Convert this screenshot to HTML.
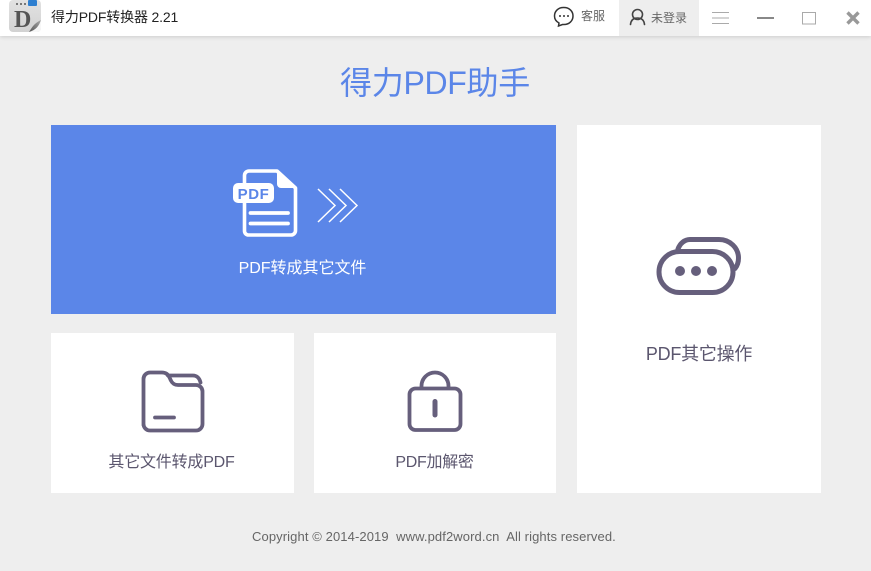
<!DOCTYPE html>
<html><head><meta charset="utf-8"><style>
html,body{margin:0;padding:0}
body{width:871px;height:571px;overflow:hidden;background:#eeeeee;position:relative;font-family:"Liberation Sans","Noto Sans CJK SC",sans-serif}
div{position:absolute;white-space:nowrap}
.t{line-height:20px}
</style></head><body>
<div style="left:0;top:0;width:871px;height:36px;background:#fff;box-shadow:0 1px 4px rgba(0,0,0,.14)"></div>
<div style="left:619px;top:0;width:80px;height:36px;background:#eeeeee"></div>
<div style="left:51px;top:125px;width:505px;height:189px;background:#5b86e8"></div>
<div style="left:577px;top:125px;width:244px;height:368px;background:#fff"></div>
<div style="left:51px;top:333px;width:243px;height:160px;background:#fff"></div>
<div style="left:314px;top:333px;width:242px;height:160px;background:#fff"></div>
<svg width="871" height="571" viewBox="0 0 871 571" style="position:absolute;left:0;top:0">
<defs><linearGradient id="g" x1="0" y1="0" x2="0" y2="1"><stop offset="0" stop-color="#e2e2e2"/><stop offset="1" stop-color="#d2d2d2"/></linearGradient>
<linearGradient id="f" x1="0" y1="1" x2="1" y2="0"><stop offset="0" stop-color="#555"/><stop offset="1" stop-color="#aaa"/></linearGradient></defs>
<rect x="9" y="0" width="32" height="32" rx="4" fill="url(#g)"/>
<path d="M41 20V28a4 4 0 0 1-4 4H29Z" fill="#f7f7f7"/>
<path d="M29 32C32 28 33 24 41 20C39 26 36 30 29 32Z" fill="url(#f)"/>
<rect x="28" y="0" width="9" height="6" rx="1" fill="#2e7fd0"/>
<g fill="#777"><rect x="16" y="3" width="2" height="2"/><rect x="20" y="3" width="2" height="2"/><rect x="24" y="3" width="2" height="2"/></g>
<text x="14" y="27" font-family="Liberation Serif" font-weight="bold" font-size="24" fill="#555">D</text>
<path d="M564 7.500c5.200 0 9 3.700 9 8.500s-3.800 8.500-9 8.500h-1.500l-4 1.500.5-3c-2.900-1.500-4.500-4-4.500-7 0-4.800 3.800-8.500 9-8.500Z" fill="none" stroke="#333" stroke-width="1.500"/>
<g fill="#333"><circle cx="560" cy="16" r="1"/><circle cx="564" cy="16" r="1"/><circle cx="568" cy="16" r="1"/></g>
<g fill="none" stroke="#444" stroke-width="1.600" stroke-linecap="round">
<circle cx="637.500" cy="14.500" r="5"/>
<path d="M630.500 24.500c.5-4.500 3.300-6.500 7-6.500s6.500 2 7 6.500"/>
</g>
<g stroke="#aaa" stroke-width="1"><path d="M712 12.500H729M712 18H729M712 23.500H729"/></g>
<rect x="757" y="17" width="17" height="2" fill="#888"/>
<rect x="802.500" y="12.500" width="13" height="11.500" fill="none" stroke="#aaa" stroke-width="1"/>
<path d="M847.500 12.500L858.500 23.500M858.500 12.500L847.500 23.500" stroke="#999" stroke-width="3.400"/>

<g fill="none" stroke="#fff">
<path d="M277 171H249a4.500 4.500 0 0 0-4.500 4.500V231a4 4 0 0 0 4 4H291a4.500 4.500 0 0 0 4.500-4.500V188Z" stroke-width="3.600" stroke-linejoin="round"/>
<path d="M277 172L296 188H281a4 4 0 0 1-4-4Z" fill="#fff" stroke="none"/>
<path d="M250.500 213H288M250.500 223.500H288" stroke-width="3.800" stroke-linecap="round"/>
<path d="M318 189L335 205.500L318 222M329 189L346 205.500L329 222M340 189L357 205.500L340 222" stroke-width="1.500"/>
</g>
<rect x="233" y="183" width="41" height="20" rx="5" fill="#fff"/>
<text x="253.500" y="199" text-anchor="middle" font-family="Liberation Sans" font-weight="bold" font-size="15" fill="#5b86e8" letter-spacing=".6">PDF</text>

<g fill="none" stroke="#665f7c" stroke-width="3.800" stroke-linecap="round" stroke-linejoin="round">
<path d="M143.500 425V379a6.500 6.500 0 0 1 6.500-6.500H162c4 0 6.500 2 8 6 1.500 4 3.500 6.500 8 6.500H196a6.500 6.500 0 0 1 6.500 6.500V424a6.500 6.500 0 0 1-6.500 6.500H150a6.500 6.500 0 0 1-6.500-6.500Z"/>
<path d="M168 375.500H193c3.500 0 6.500 2.500 7.500 7"/>
<path d="M155 417.500H174"/>
<rect x="409.500" y="388.500" width="51" height="41.500" rx="6"/>
<path d="M421.500 388V386a13.500 13.500 0 0 1 27 0V388"/>
</g>
<path d="M435 401.500V415" stroke="#665f7c" stroke-width="5" stroke-linecap="round"/>
<g fill="none" stroke="#665f7c" stroke-width="5" stroke-linecap="round">
<rect x="659" y="251.500" width="74" height="41" rx="20.500"/>
<path d="M678 249c2-5.500 6.500-9.500 12-9.500H719c11 0 19.500 8.500 19.500 18.500 0 4-1 7.500-3.500 10.500"/>
</g>
<g fill="#665f7c"><circle cx="680" cy="271" r="5"/><circle cx="696" cy="271" r="5"/><circle cx="712" cy="271" r="5"/></g>
</svg>
<div class="t" style="left:51px;top:7px;font-size:14px;color:#222;letter-spacing:-.15px">得力PDF转换器 2.21</div>
<div class="t" style="left:581px;top:6px;font-size:12px;color:#666">客服</div>
<div class="t" style="left:651px;top:8px;font-size:12px;color:#666">未登录</div>
<div style="left:235px;width:400px;text-align:center;top:61px;line-height:44px;font-size:32px;color:#5b86e8;letter-spacing:-.3px">得力PDF助手</div>
<div class="t" style="left:50px;width:505px;text-align:center;top:258px;font-size:16px;color:#fff;margin-top:0;padding-top:0;transform:translateY(0)"><span style="position:relative;top:1px;letter-spacing:-.02px">PDF转成其它文件</span></div>
<div class="t" style="left:577px;width:244px;text-align:center;top:344px;font-size:18px;color:#5b566e;letter-spacing:-.25px">PDF其它操作</div>
<div class="t" style="left:51px;width:241px;text-align:center;top:453px;font-size:16px;color:#5b566e;letter-spacing:-.2px">其它文件转成PDF</div>
<div class="t" style="left:314px;width:241px;text-align:center;top:453px;font-size:16px;color:#5b566e;letter-spacing:-.3px">PDF加解密</div>
<div class="t" style="left:252px;top:527px;font-size:13px;color:#666;white-space:pre;letter-spacing:.1px">Copyright © 2014-2019  www.pdf2word.cn  All rights reserved.</div>
</body></html>
